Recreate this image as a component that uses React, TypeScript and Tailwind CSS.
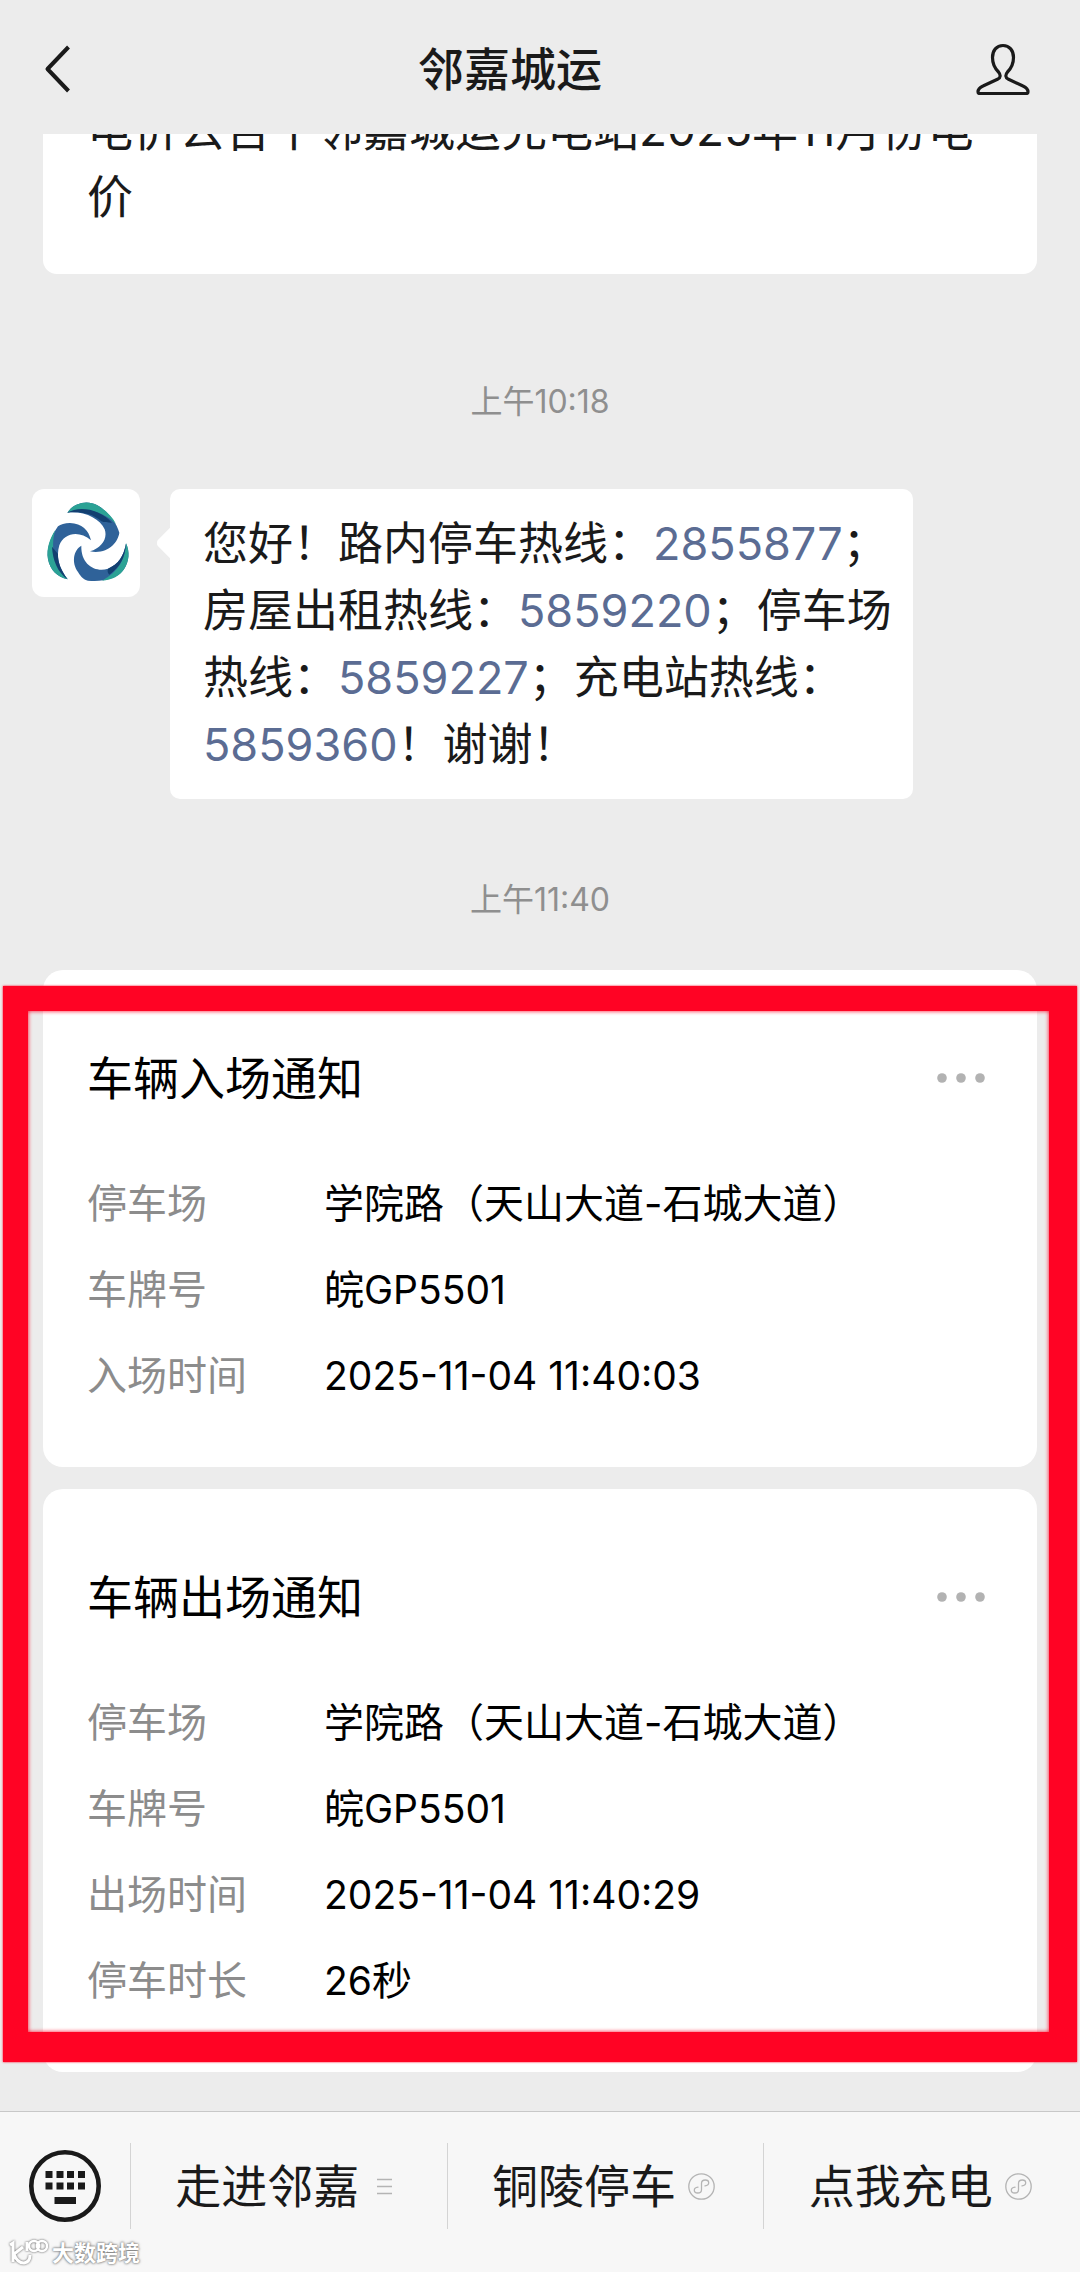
import React from "react";

type Row = { label: string; value: React.ReactNode };

const Num = ({ children }: { children: React.ReactNode }) => (
  <span className="text-[39px] leading-none">{children}</span>
);

const Phone = ({ number }: { number: string }) => (
  <a href={`tel:${number}`} className="leading-none text-[#5b6c93]">
    {number}
  </a>
);

const entryRows: Row[] = [
  { label: "停车场", value: "学院路（天山大道-石城大道）" },
  { label: "车牌号", value: <>皖<Num>GP5501</Num></> },
  { label: "入场时间", value: <Num>2025-11-04 11:40:03</Num> },
];

const exitRows: Row[] = [
  { label: "停车场", value: "学院路（天山大道-石城大道）" },
  { label: "车牌号", value: <>皖<Num>GP5501</Num></> },
  { label: "出场时间", value: <Num>2025-11-04 11:40:29</Num> },
  { label: "停车时长", value: <><Num>26</Num>秒</> },
];

const Logo = () => (
  <svg viewBox="36 27 324 324" className="w-full h-full" aria-hidden="true">
    <path d="M142 98C160 70 200 58 232 76C262 92 290 128 298 158C294 188 262 224 210 214C244 204 264 176 254 148C240 116 192 92 142 98Z" fill="#2f6299" />
    <path d="M142 98C160 70 200 58 232 76C256 90 276 108 288 132C262 104 200 74 142 98Z" fill="#2ba295" />
    <path d="M142 98C176 76 240 86 276 128C262 128 252 128 244 124C218 100 180 94 142 98Z" fill="#123f70" />
    <path d="M213 181C206 150 186 130 150 129C134 129 122 133 114 139C94 168 78 204 84 238C90 270 112 292 143 298C116 262 108 230 118 196C132 158 178 150 213 181Z" fill="#2f6299" />
    <path d="M106 150C90 174 78 206 84 238C90 270 112 292 143 298C108 262 88 208 106 150Z" fill="#2ba295" />
    <path d="M96 200C98 240 112 276 143 298C122 270 113 246 114 222Z" fill="#123f70" />
    <path d="M184 197C160 210 154 248 174 276C184 292 192 300 204 302C246 306 290 298 312 268C328 244 330 216 318 190C312 228 294 254 264 266C226 278 182 254 184 197Z" fill="#2f6299" />
    <path d="M246 302C276 300 300 288 312 268C328 244 330 216 318 190C316 236 296 276 246 302Z" fill="#2ba295" />
    <path d="M318 190C316 232 300 262 268 284C262 278 262 272 264 266C294 254 312 228 318 190Z" fill="#123f70" />
  </svg>
);

const MiniProgramIcon = () => (
  <svg viewBox="0 0 27 27" className="w-[27px] h-[27px]" fill="none" stroke="#b4b4b4" strokeWidth="1.3" aria-hidden="true">
    <circle cx="13.5" cy="13.5" r="12.7" />
    <path d="M17 12.9c2.2-.3 3.7-1.6 3.7-3.1 0-1.7-1.5-2.8-3.4-2.8-2.1 0-3.8 1.4-3.8 3.3v6.4c0 1.9-1.7 3.3-3.8 3.3-1.9 0-3.4-1.1-3.4-2.8 0-1.5 1.5-2.8 3.7-3.1" strokeLinecap="round" />
  </svg>
);

const ListIcon = () => (
  <svg viewBox="0 0 27 27" className="w-[27px] h-[27px]" stroke="#b4b4b4" strokeWidth="1.3" aria-hidden="true">
    <path d="M6 6.5h15M6 13.5h15M6 20.5h15" />
  </svg>
);

const NoticeCard = ({ title, rows }: { title: string; rows: Row[] }) => (
  <article className="bg-white rounded-[20px] pt-[76px] pb-[48px] pl-[44px] pr-[52px]">
    <div className="flex items-center justify-between mb-[51px]">
      <h2 className="text-[46px] leading-[64px]">{title}</h2>
      <button aria-label="更多">
        <svg viewBox="0 0 48 10" className="w-[48px] h-[10px]" fill="#b2b2b2">
          <circle cx="5" cy="5" r="4.8" />
          <circle cx="24" cy="5" r="4.8" />
          <circle cx="43" cy="5" r="4.8" />
        </svg>
      </button>
    </div>
    <dl>
      {rows.map((row) => (
        <div key={row.label} className="flex h-[86px] text-[40px] leading-[86px]">
          <dt className="w-[237px] shrink-0 text-[#8c8c8c]">{row.label}</dt>
          <dd>{row.value}</dd>
        </div>
      ))}
    </dl>
  </article>
);

const menus = [
  { text: "走进邻嘉", icon: <ListIcon /> },
  { text: "铜陵停车", icon: <MiniProgramIcon /> },
  { text: "点我充电", icon: <MiniProgramIcon /> },
];

const App: React.FC = () => {
  return (
    <div className="min-h-screen flex flex-col bg-[#ececec] text-black font-['Inter','Noto_Sans_CJK_SC',sans-serif]">
      {/* Header */}
      <header className="sticky top-0 z-10 flex items-center h-[134px] pt-1 bg-[#ececec] text-[#1a1a1a]">
        <button aria-label="返回" className="w-[120px] pl-[44px]">
          <svg viewBox="0 0 28 48" className="w-[28px] h-[48px]" fill="none" stroke="currentColor" strokeWidth="4">
            <path d="M24.5 2L3.5 24L24.5 46" strokeLinejoin="round" />
          </svg>
        </button>
        <h1 className="flex-1 pr-[60px] text-center text-[46px] leading-[64px] font-medium">邻嘉城运</h1>
        <button aria-label="个人资料" className="flex justify-end w-[120px] pr-[50px]">
          <svg viewBox="0 0 54 52" className="w-[54px] h-[52px]" fill="none" stroke="currentColor" strokeWidth="3.2" strokeLinejoin="round">
            <path d="M27 2.5C20.500 2.500 16.500 7.500 16.500 14.500C16.500 21 18.500 25 22.500 29C25 32 24.500 34.500 22 36L7 43C3.500 44.500 2 46.500 2 49C2 50 2.500 50.500 3.500 50.500H50.500C51.500 50.500 52 50 52 49C52 46.500 50.500 44.500 47 43L32 36C29.500 34.500 29 32 31.500 29C35.500 25 37.500 21 37.500 14.500C37.500 7.500 33.500 2.500 27 2.500Z" />
          </svg>
        </button>
      </header>

      {/* Messages, the first card is scrolled under the header */}
      <main className="flex-1 -mt-[38px] pb-[38px]">
        <p className="mx-[43px] bg-white rounded-b-[14px] px-[44px] pb-[44px] text-[46px] leading-[67px] text-[#1a1a1a]">
          电价公告丨邻嘉城运充电站2025年11月份电价
        </p>

        <time className="block mt-[103px] mb-[62px] text-center text-[32px] leading-[50px] text-[#8f8f8f]">上午10:18</time>

        <div className="flex items-start gap-[30px] pl-[32px] pr-[167px]">
          <div className="w-[108px] h-[108px] shrink-0 rounded-[12px] bg-white overflow-hidden">
            <Logo />
          </div>
          <div className="relative flex-1 rounded-[10px] bg-white py-[21px] pl-[33px] pr-2 text-[45px] leading-[67px] text-[#1a1a1a]">
            <span className="absolute -left-[9px] top-[39px] w-[30px] h-[30px] rotate-45 rounded-[5px] bg-white" />
            <div className="relative">
              <p className="h-[67px]">您好！路内停车热线：<Phone number="2855877" />；</p>
              <p className="h-[67px]">房屋出租热线：<Phone number="5859220" />；停车场</p>
              <p className="h-[67px]">热线：<Phone number="5859227" />；充电站热线：</p>
              <p className="h-[67px]"><Phone number="5859360" />！谢谢！</p>
            </div>
          </div>
        </div>

        <time className="block mt-[76px] mb-[45px] text-center text-[32px] leading-[50px] text-[#8f8f8f]">上午11:40</time>

        <section className="relative flex flex-col gap-[22px] px-[43px]">
          <NoticeCard title="车辆入场通知" rows={entryRows} />
          <NoticeCard title="车辆出场通知" rows={exitRows} />
          {/* Red highlight frame */}
          <div className="absolute inset-x-[3px] top-[16px] bottom-[10px] border-[#ff0324] border-t-[25px] border-b-[30px] border-l-[25px] border-r-[28px] shadow-[0_0_2px_#ff0324,inset_0_0_4px_#ff0324] pointer-events-none" />
        </section>
      </main>

      {/* Bottom menu */}
      <footer className="relative border-t border-[#c8c8c8] bg-[#f7f7f7] pb-[12px] text-[#1a1a1a]">
        <nav className="flex items-center h-[148px]">
          <button aria-label="键盘" className="flex justify-center w-[130px]">
            <svg viewBox="0 0 74 74" className="w-[74px] h-[74px]" fill="currentColor">
              <circle cx="37" cy="37" r="33.700" fill="none" stroke="currentColor" strokeWidth="4.600" />
              <path d="M17.500 22h7v7h-7zM28.500 22h7v7h-7zM39 22h7v7h-7zM50 22h7v7h-7zM17.500 33.500h7v7h-7zM28.500 33.500h7v7h-7zM39 33.500h7v7h-7zM50 33.500h7v7h-7zM26.500 48h21.500v7h-21.500z" />
            </svg>
          </button>
          {menus.map((menu) => (
            <button
              key={menu.text}
              className="flex flex-1 items-center justify-center gap-3 h-[86px] pr-1 border-l border-[#d4d4d4] text-[46px] leading-[64px]"
            >
              {menu.text}
              {menu.icon}
            </button>
          ))}
        </nav>
        {/* Watermark */}
        <div className="absolute left-[8px] bottom-[3px] flex items-center gap-1 text-[22px] leading-[32px] font-bold text-white [text-shadow:0_0_2px_#777,0_0_3px_#777]">
          <svg viewBox="0 0 40 30" className="w-[40px] h-[30px] drop-shadow-[0_0_1px_#555]" fill="none" stroke="#fff" strokeWidth="3">
            <path d="M2 7L5 5V24M15 9L6 16Q9 25 16 25Q22 24 22 17M19 4V13" />
            <circle cx="26" cy="8" r="5" strokeWidth="2.500" />
            <circle cx="34" cy="8" r="5" strokeWidth="2.500" />
          </svg>
          大数跨境
        </div>
      </footer>
    </div>
  );
};

export default App;
